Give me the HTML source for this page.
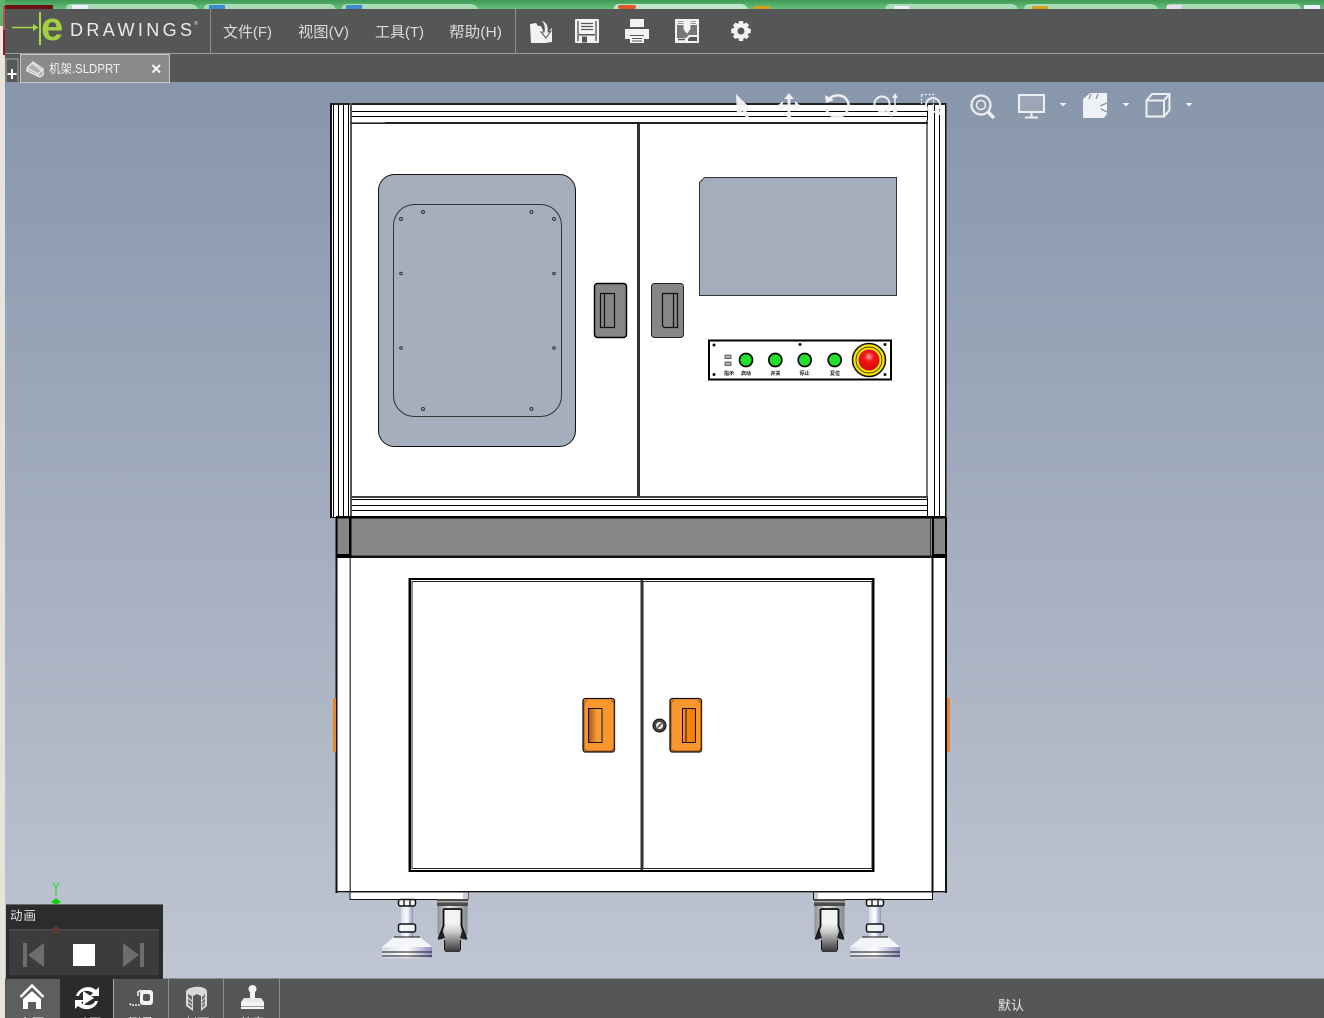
<!DOCTYPE html>
<html lang="zh"><head><meta charset="utf-8"><title>eDrawings</title>
<style>
html,body{margin:0;padding:0;width:1324px;height:1018px;overflow:hidden;background:#555756}
svg{display:block;position:absolute;left:0;top:0}
text{font-family:"Liberation Sans","Noto Sans CJK SC",sans-serif}
</style></head><body>
<svg width="1324" height="1018" viewBox="0 0 1324 1018" xmlns="http://www.w3.org/2000/svg">
<defs>
<linearGradient id="bg" x1="0" y1="0" x2="0" y2="1"><stop offset="0" stop-color="#8896ab"/><stop offset="1" stop-color="#bfc5d2"/></linearGradient>
<linearGradient id="green" x1="0" y1="0" x2="0" y2="1"><stop offset="0" stop-color="#3f9a55"/><stop offset="1" stop-color="#67c07c"/></linearGradient>
<linearGradient id="stem" x1="0" y1="0" x2="1" y2="0"><stop offset="0" stop-color="#d8dcea"/><stop offset=".5" stop-color="#ffffff"/><stop offset="1" stop-color="#8f90c0"/></linearGradient>
<linearGradient id="wheel" x1="0" y1="0" x2="0" y2="1"><stop offset="0" stop-color="#f0f0f0"/><stop offset=".25" stop-color="#d0d0d0"/><stop offset="1" stop-color="#333333"/></linearGradient>
<linearGradient id="cas" x1="0" y1="0" x2="1" y2="0"><stop offset="0" stop-color="#8d8f92"/><stop offset=".4" stop-color="#e4e6ea"/><stop offset="1" stop-color="#85878a"/></linearGradient>
<linearGradient id="org" x1="0" y1="0" x2="1" y2="0"><stop offset="0" stop-color="#a85510"/><stop offset=".6" stop-color="#f59a35"/><stop offset="1" stop-color="#f9a040"/></linearGradient>
<linearGradient id="org2" x1="0" y1="0" x2="1" y2="0"><stop offset="0" stop-color="#ff8c1a"/><stop offset="1" stop-color="#ee7a05"/></linearGradient>
<radialGradient id="red" cx=".5" cy=".35" r=".65"><stop offset="0" stop-color="#f5a0a0"/><stop offset=".35" stop-color="#f01818"/><stop offset="1" stop-color="#d80808"/></radialGradient>
<g id="foot">
<rect x="-6" y="0" width="12" height="38" fill="url(#stem)"/>
<rect x="-8.5" y="0.500" width="17" height="6.500" rx="2" fill="#f2f3f7" stroke="#111" stroke-width="1.500"/>
<path d="M-3 0V7M3 0V7" stroke="#111" stroke-width="1.300"/>
<rect x="-8.5" y="25" width="17" height="8" rx="2" fill="#f2f3f7" stroke="#111" stroke-width="1.500"/>
<path d="M-13 38H13L25 48H-25Z" fill="#f4f5f8"/>
<path d="M-25 48H25V59H-25Z" fill="url(#stem)"/>
<path d="M-13 38H13M-25 53H25M-25 57H25" stroke="#111" stroke-width="1.100"/>
<path d="M-25 59H25" stroke="#ccd" stroke-width="1"/>
</g>
<g id="caster">
<rect x="-15.500" y="-1" width="31" height="7" fill="#4c4c4c"/>
<rect x="-15.500" y="1" width="31" height="1.500" fill="#aaa"/>
<path d="M-15 6H15V34L12 40H-12L-15 34Z" fill="url(#cas)"/>
<path d="M-8 9H8V24H-8Z" fill="#f2f3f5"/>
<rect x="-8" y="24" width="16" height="28" rx="2" fill="url(#wheel)"/>
<path d="M-9 9V26L-14 39M9 9V26L14 39M-9 9H9" stroke="#111" stroke-width="1.800" fill="none"/>
<path d="M-14.500 40L-10 30L-7.500 38ZM14.500 40L10 30L7.500 38Z" fill="#222"/>
<path d="M-8 40V50M8 40V50" stroke="#111" stroke-width="1"/>
</g>
</defs>

<!-- desktop behind -->
<rect width="1324" height="9" fill="url(#green)"/>
<g fill="#a9dcb6">
<path d="M66 9C66 5 68 4 72 4H190C194 4 196 5 198 9Z"/>
<path d="M204 9C204 5 206 4 210 4H328C332 4 334 5 336 9Z"/>
<path d="M342 9C342 5 344 4 348 4H470C474 4 476 5 478 9Z"/>
<path d="M614 9C614 5 616 4 620 4H740C744 4 746 5 748 9Z" fill="#bfe8c8"/>
<path d="M885 9C885 5 888 4 892 4H1010C1014 4 1016 5 1018 9Z"/>
<path d="M1024 9C1024 5 1027 4 1031 4H1150C1154 4 1156 5 1158 9Z"/>
<path d="M1166 9C1166 5 1168 4 1172 4H1295C1298 4 1300 5 1301 9Z"/>
</g>
<rect x="72" y="5" width="16" height="4" fill="#e8eefc"/><rect x="209" y="5" width="16" height="4" fill="#3a8bd0"/><rect x="346" y="5" width="16" height="4" fill="#3a8bd0"/>
<rect x="618" y="5" width="18" height="4" rx="2" fill="#e2562a"/><rect x="754" y="6" width="16" height="3" fill="#d8a020"/><rect x="894" y="6" width="15" height="3" fill="#e8eefc"/><rect x="1032" y="6" width="16" height="3" fill="#d8a020"/><rect x="1167" y="5" width="15" height="4" fill="#e8dcf0"/><rect x="1304" y="5" width="16" height="4" fill="#e8f0fa"/>
<rect x="3" y="5" width="50" height="4" fill="#6d1018"/>
<rect x="0" y="0" width="5" height="1018" fill="#e8e4dc"/>
<rect x="0" y="0" width="5" height="6" fill="#5cb26e"/>
<rect x="0" y="6" width="3" height="20" fill="#5cb26e"/>
<rect x="3" y="6" width="2" height="24" fill="#c05050"/>
<rect x="0" y="26" width="3" height="29" fill="#efe9e4"/>
<rect x="3" y="30" width="2" height="25" fill="#8c1c22"/>

<!-- viewport -->
<rect x="5" y="82" width="1319" height="897" fill="url(#bg)"/>

<!-- toolbar -->
<rect x="5" y="9" width="1319" height="73" fill="#555756"/>
<rect x="5" y="53" width="1319" height="1" fill="#9a9b9a"/>
<rect x="210" y="9" width="1" height="45" fill="#8f908f"/>
<rect x="515" y="9" width="1" height="45" fill="#8f908f"/>
<path d="M12 27.500H37" stroke="#a8d84a" stroke-width="1.500"/>
<path d="M33 24L38.500 27.500L33 31Z" fill="#a8d84a"/>
<rect x="39" y="12" width="2" height="33" fill="#a8d84a"/>
<text x="41" y="40" font-size="40" font-weight="700" fill="#a4cf44">e</text>
<text x="70" y="36" font-size="18" fill="#ececec" textLength="122">DRAWINGS</text>
<text x="194" y="25" font-size="5" fill="#e8e8e8">®</text>
<g font-size="15" fill="#dcdcdc">
<text x="223" y="37" textLength="49" lengthAdjust="spacingAndGlyphs">文件(F)</text>
<text x="298" y="37" textLength="51" lengthAdjust="spacingAndGlyphs">视图(V)</text>
<text x="375" y="37" textLength="49" lengthAdjust="spacingAndGlyphs">工具(T)</text>
<text x="449" y="37" textLength="53" lengthAdjust="spacingAndGlyphs">帮助(H)</text>
</g>

<!-- tabs -->
<path d="M6 82V59H18V82" fill="#555756" stroke="#a8a8a8" stroke-width="1"/>
<path d="M12 69V79M7.500 74H16.500" stroke="#fff" stroke-width="2"/>
<rect x="20.500" y="54.500" width="149" height="28" fill="#8a8a8a" stroke="#c8c8c8"/>
<g fill="none" stroke="#e8e8e8" stroke-width="1.300">
<path d="M27 68L33 62L43 69V75L40 77L27 71Z" fill="#b0b0b0"/>
<path d="M27 68L38 74V77M38 74L43 69M32 63L41 70"/>
</g>
<text x="49" y="73" font-size="12.500" fill="#f2f2f2" textLength="71" lengthAdjust="spacingAndGlyphs">机架.SLDPRT</text>
<path d="M152.500 65L160 72.500M160 65L152.500 72.500" stroke="#f4f4f4" stroke-width="2"/>

<!-- toolbar icons -->
<g fill="#f2f2f2">
<path d="M530 24L536 23L538 26H541L545 35L552 28V42L545 43H531Z"/>
<path d="M540 20C546 21 549 25 548 32L551 31L546 38L541 32L544 32C545 27 544 23 540 20Z" stroke="#555756" stroke-width="1"/>
<!-- save -->
<rect x="575" y="19" width="24" height="24" rx="1"/>
<rect x="577" y="21" width="2" height="20" fill="#8a8a8a"/>
<rect x="595" y="21" width="2" height="20" fill="#8a8a8a"/>
<rect x="580" y="20.500" width="14" height="13" fill="#f6f6f6"/>
<path d="M581 23.500H593M581 26.500H593M581 29.500H593" stroke="#555756" stroke-width="1.200"/>
<rect x="579" y="34" width="16" height="1.500" fill="#555756"/>
<rect x="582" y="36.500" width="5" height="6" fill="#555756"/>
<!-- print -->
<path d="M630 19H644V27H630Z"/>
<path d="M625 29H649V39H644V35H630V39H625Z"/>
<path d="M630 36H644V43H630ZM632 38V39H642V38ZM632 40.500V41.500H642V40.500Z" fill-rule="evenodd"/>
<!-- report -->
<rect x="675" y="19" width="24" height="24"/>
<path d="M677 25H697V35H689L686 38H677Z" fill="#777"/>
<path d="M678 21.500H696M678 23.500H696" stroke="#777" stroke-width=".8"/>
<path d="M684 20H690V29L687 33L684 29Z" stroke="#f2f2f2"/>
<path d="M688 39L690 37H697V41H688Z" fill="#555756"/>
<path d="M678 39.500H685" stroke="#555756" stroke-width="1.500"/>
<!-- gear -->
<path d="M739 21H743L743.700 24 746.500 22.500 749 25 747.500 27.800 750.800 29V33L747.500 33.800 749 36.800 746.500 39 743.700 37.800 743 41H739L738.300 37.800 735.500 39 733 36.800 734.500 33.800 731.200 33V29L734.500 27.800 733 25 735.500 22.500 738.300 24ZM741 27.500A3.500 3.500 0 1 0 741 34.500A3.500 3.500 0 1 0 741 27.500Z" fill-rule="evenodd"/>
</g>

<!-- MACHINE -->
<g shape-rendering="crispEdges">
<rect x="331" y="103" width="615" height="415" fill="#fff"/>
<g stroke="#000" stroke-width="1" fill="none">
<path d="M333.500 103V517M338.500 103V517M343.500 103V517M348.500 103V517"/>
<path d="M927.500 103V517M934.500 104V517M939.500 104V517"/>
<path d="M350 111.500H927M350 116.500H927"/>
<path d="M350 499.500H927M350 505.500H927M350 510.500H927"/>
<path d="M331 517.500H350"/>
</g>
<rect x="330" y="103" width="2" height="415" fill="#111"/>
<rect x="945" y="103" width="1.500" height="415" fill="#111"/>
<rect x="330" y="103" width="616" height="2" fill="#222"/>
<rect x="350" y="103" width="2" height="414" fill="#555"/>
<rect x="926" y="120" width="2" height="378" fill="#777"/>
<rect x="351" y="122" width="577" height="2" fill="#222"/>
<rect x="352" y="122" width="33" height="1" fill="#777"/>
<rect x="351" y="496" width="577" height="2" fill="#444"/>
<rect x="637" y="124" width="3" height="372" fill="#333"/>
</g>

<!-- left window -->
<rect x="378.500" y="174.500" width="197" height="272" rx="16" fill="#a5aebd" stroke="#111" stroke-width="1"/>
<rect x="393.500" y="204.500" width="168" height="212" rx="21" fill="none" stroke="#333" stroke-width="1"/>
<g fill="none" stroke="#333" stroke-width="1">
<circle cx="423" cy="212" r="1.500"/><circle cx="531.500" cy="212" r="1.500"/><circle cx="401" cy="219" r="1.500"/><circle cx="554" cy="219" r="1.500"/>
<circle cx="401" cy="273.500" r="1.300"/><circle cx="554" cy="273.500" r="1.300"/><circle cx="401" cy="348" r="1.300"/><circle cx="554" cy="348" r="1.300"/>
<circle cx="423" cy="409" r="1.500"/><circle cx="531.500" cy="409" r="1.500"/>
</g>
<!-- right window -->
<path d="M704.500 177.500H896.500V295.500H699.500V182.500Z" fill="#a3adbc" stroke="#333" stroke-width="1"/>
<!-- handles upper -->
<rect x="594.500" y="283.500" width="32" height="54" rx="3" fill="#868686" stroke="#000" stroke-width="1.500"/>
<path d="M600.500 293.500H614.500V327.500H600.500ZM604.500 293.500V327.500" fill="none" stroke="#111" stroke-width="1.200"/>
<rect x="651.500" y="283.500" width="32" height="54" rx="3" fill="#868686" stroke="#222" stroke-width="1"/>
<path d="M662.500 293.500H677.500V327.500H665C663 327.500 662.500 326 662.500 324ZM673.500 293.500V327.500" fill="none" stroke="#111" stroke-width="1.200"/>

<!-- control panel -->
<rect x="709" y="340.500" width="182" height="39" fill="#fff" stroke="#000" stroke-width="2"/>
<rect x="725" y="355" width="6" height="3.500" fill="#a3adbc" stroke="#333" stroke-width=".7"/>
<rect x="725" y="362" width="6" height="3.500" fill="#a3adbc" stroke="#333" stroke-width=".7"/>
<g fill="#111"><circle cx="714" cy="345" r="1.500"/><circle cx="714" cy="374.500" r="1.500"/><circle cx="800" cy="344.500" r="1.500"/><circle cx="885" cy="344.500" r="1.500"/><circle cx="885" cy="374.500" r="1.500"/></g>
<g fill="#22e02c" stroke="#0a0a0a" stroke-width="1.700">
<circle cx="746" cy="360" r="6.500"/><circle cx="775.300" cy="360" r="6.500"/><circle cx="804.700" cy="360" r="6.500"/><circle cx="834.700" cy="360" r="6.500"/>
</g>
<g font-size="5" font-weight="700" fill="#111" text-anchor="middle">
<text x="729" y="375">指示</text><text x="746" y="375">启动</text><text x="775.500" y="375">开关</text><text x="804.500" y="375">停止</text><text x="835" y="375">复位</text>
</g>
<circle cx="869" cy="360" r="16.500" fill="#f5e400" stroke="#111" stroke-width="1.500"/>
<circle cx="869" cy="360" r="13" fill="none" stroke="#111" stroke-width=".7"/>
<circle cx="869" cy="360" r="10.500" fill="url(#red)"/>

<!-- band -->
<g shape-rendering="crispEdges">
<rect x="336" y="517" width="610" height="41" fill="#868686"/>
<rect x="336" y="516" width="610" height="2.500" fill="#000"/>
<rect x="336" y="555.500" width="610" height="2.500" fill="#111"/>
<rect x="335.500" y="517" width="2" height="41" fill="#000"/>
<rect x="349" y="517" width="2.500" height="41" fill="#000"/>
<rect x="930" y="517" width="1" height="41" fill="#333"/>
<rect x="932" y="517" width="2" height="41" fill="#000"/>
<rect x="945" y="517" width="2" height="41" fill="#000"/>
<rect x="336" y="554" width="14" height="4" fill="#000"/>
<rect x="932" y="554" width="14" height="4" fill="#000"/>
<!-- lower cabinet -->
<rect x="336" y="558" width="610" height="335" fill="#fff"/>
<rect x="335.500" y="558" width="2" height="335" fill="#111"/>
<rect x="349.500" y="558" width="1.500" height="335" fill="#555"/>
<rect x="931.500" y="558" width="2" height="335" fill="#111"/>
<rect x="945" y="558" width="2" height="335" fill="#111"/>
<rect x="336" y="891" width="610" height="1.500" fill="#111"/>
<!-- side orange tabs -->
<rect x="333" y="698" width="3" height="54" fill="#e8862a"/>
<rect x="947" y="698" width="3" height="54" fill="#e8862a"/>
<!-- door frame -->
<rect x="408.500" y="578" width="466" height="294" fill="#000"/>
<rect x="411" y="580" width="461" height="290" fill="#fff"/>
<rect x="412" y="581.500" width="229" height="287" fill="#fff" stroke="#222"/>
<rect x="643" y="581.500" width="229" height="287" fill="#fff" stroke="#222"/>
<rect x="640.500" y="580" width="2.500" height="290" fill="#333"/>
</g>
<!-- orange handles -->
<rect x="583" y="698.500" width="31.500" height="53.500" rx="2.500" fill="#f9962e" stroke="#111" stroke-width="1.300"/>
<path d="M587 700L584 703V749L587 751H611L614 749V703L611 700" fill="none" stroke="#7a4410" stroke-width=".8"/>
<rect x="588.500" y="708.500" width="13.500" height="34" fill="url(#org)" stroke="#111"/>
<rect x="670" y="698.500" width="31.500" height="53.500" rx="2.500" fill="#f9962e" stroke="#111" stroke-width="1.300"/>
<path d="M674 700L671 703V749L674 751H698L701 749V703L698 700" fill="none" stroke="#7a4410" stroke-width=".8"/>
<rect x="682.500" y="708.500" width="13" height="34" fill="url(#org2)" stroke="#111"/>
<path d="M686 708.500V742.500" stroke="#111"/>
<!-- lock -->
<circle cx="659.500" cy="725.500" r="6.500" fill="#444" stroke="#111"/>
<circle cx="659.500" cy="725.500" r="3.500" fill="#eee"/>
<path d="M657.500 727.500L661.500 723.500" stroke="#333" stroke-width="1.300"/>

<!-- bottom rail + feet -->
<g shape-rendering="crispEdges">
<rect x="350" y="892" width="118" height="7.500" fill="#fff" stroke="#111" stroke-width="1"/>
<rect x="813.500" y="892" width="119" height="7.500" fill="#fff" stroke="#111" stroke-width="1"/>
<rect x="463" y="893" width="5" height="6" fill="#ccc"/>
<rect x="814" y="893" width="4" height="6" fill="#ccc"/>
</g>
<use href="#foot" x="407" y="899"/>
<use href="#foot" x="875" y="899"/>
<use href="#caster" x="452.500" y="900"/>
<use href="#caster" x="829.500" y="900"/>

<!-- view toolbar icons -->
<g fill="none" stroke="#f2f3f6" stroke-width="2.500" opacity=".95">
<path d="M736 94L752 110H746L749 118H746L742.500 111L737 116Z" fill="#f2f3f6" stroke="none"/>
<path d="M789 96V116M779 106H799" stroke-width="3"/>
<path d="M789 93L784 99H794ZM789 119L784 113H794ZM777 106L783 101V111ZM801 106L795 101V111Z" fill="#f2f3f6" stroke="none"/>
<path d="M829 99C834 94 843 94 847 100C851 107 847 116 838 117C832 117 828 114 826 109"/>
<path d="M825 95L834 100L826 103Z" fill="#f2f3f6" stroke="none"/>
<circle cx="882" cy="104" r="7.500" stroke-width="2"/>
<path d="M887 110L892 116" stroke-width="3"/>
<path d="M895 96V112" stroke-width="1.600"/>
<path d="M895 93L892 98H898ZM895 115L892 110H898Z" fill="#f2f3f6" stroke="none"/>
<rect x="921.500" y="94.500" width="12" height="12" stroke-width="1.200" stroke-dasharray="2 1.500"/>
<circle cx="933" cy="105" r="7" stroke-width="2"/>
<path d="M938 111L944 118" stroke-width="3"/>
<circle cx="981" cy="105" r="9.500" stroke-width="2.200"/>
<circle cx="981" cy="105" r="4.500" stroke-width="1.500"/>
<path d="M988 112L994 118" stroke-width="3.500"/>
<rect x="1019" y="95" width="25" height="17" fill="#9ea7b8" stroke-width="2"/>
<path d="M1031.500 112V117M1025 117.500H1038" stroke-width="2"/>
<path d="M1083 99L1090 93H1107V114L1104 118H1083Z" fill="#f6f6f8" stroke="none"/>
<path d="M1091 94L1089 99M1098 94L1096 99M1107 103L1100 106M1107 112L1101 109" stroke="#8d99ad" stroke-width="1.400"/>
<path d="M1146.500 100.500L1152 94H1169.500V110L1164 116.500H1146.500ZM1146.500 100.500H1164V116.500M1164 100.500L1169.500 94" stroke-width="2"/>
</g>
<g fill="#f4f4f6">
<path d="M1059.500 103H1066.500L1063 106.500Z"/>
<path d="M1122.500 103H1129.500L1126 106.500Z"/>
<path d="M1185.500 103H1192.500L1189 106.500Z"/>
</g>

<!-- triad -->
<path d="M53 882.500L56 887.500L59 882.500M56 887.500V896" fill="none" stroke="#1ce01c" stroke-width="1"/>
<path d="M51 902L56 898L61 902L56 905Z" fill="#10d010"/>

<!-- bottom bar -->
<rect x="5" y="978" width="1319" height="40" fill="#555756"/>
<rect x="5" y="978" width="1319" height="1" fill="#8d8e8d"/>
<rect x="6" y="979" width="54" height="39" fill="#5d5f5e"/>
<rect x="60" y="979" width="53" height="39" fill="#2b2b2b"/>
<rect x="113" y="979" width="1" height="39" fill="#a5a5a5"/>
<rect x="168" y="979" width="1" height="39" fill="#8f8f8f"/>
<rect x="223" y="979" width="1" height="39" fill="#8f8f8f"/>
<rect x="279" y="979" width="1" height="39" fill="#8f8f8f"/>
<text x="998" y="1010" font-size="13" fill="#e8e8e8">默认</text>
<g font-size="12.500" fill="#f0f0f0" text-anchor="middle">
<text x="32" y="1027.500">主页</text><text x="89" y="1027.500">动画</text><text x="141" y="1027.500">测量</text><text x="197" y="1027.500">剖面</text><text x="252" y="1027.500">盖章</text>
</g>
<!-- home -->
<path d="M20.500 997L32 985.500L43.500 997" fill="none" stroke="#fff" stroke-width="2.500"/>
<path d="M32 991L41 999V1009H36V1002H28V1009H23V999Z" fill="#fff"/>
<!-- animate -->
<path d="M83 991L94 998L83 1005Z" fill="#fff"/>
<path d="M76 996C78 988 89 984 96 990L99 987V996H90L93 993C87 989 80 991 79 996Z" fill="#fff"/>
<path d="M98 1001C96 1009 85 1012 78 1006L75 1009V1000H84L81 1003C87 1007 94 1005 95 1001Z" fill="#fff"/>
<!-- measure -->
<rect x="140" y="990" width="13" height="15" rx="3" fill="#f4f4f4"/>
<rect x="143" y="994" width="7" height="7" rx="2" fill="#555756"/>
<path d="M140 1005H131L129 1003" fill="none" stroke="#f0f0f0" stroke-width="1.500" stroke-dasharray="2 1"/>
<path d="M141 990L138 992V996" stroke="#f0f0f0" fill="none" stroke-width="1.500"/>
<!-- section -->
<path d="M186 992C186 986 207 984 207 992V1006L201 1011V996L197 994L193 996V1011L186 1006Z" fill="#d8d8d8"/>
<path d="M188 994L192 996V1008L188 1005ZM202 997L205 994V1005L202 1008Z" fill="#6e6e6e"/>
<path d="M188 998L192 1001M188 1002L192 1005M202 1001L205 998M202 1005L205 1002" stroke="#eee" stroke-width=".8"/>
<!-- stamp -->
<circle cx="252.500" cy="989" r="4" fill="#f4f4f4"/>
<rect x="250" y="991" width="5" height="9" fill="#f4f4f4"/>
<path d="M244 998H261L264 1002H241Z" fill="#e8e8e8"/>
<rect x="241" y="1002" width="23" height="7" fill="#f4f4f4"/>
<rect x="241" y="1006" width="23" height="1" fill="#999"/>

<!-- animation panel -->
<rect x="6" y="904" width="157" height="75" fill="#2c2c2c"/>
<rect x="6" y="904" width="157" height="1" fill="#6a6a6c"/>
<text x="10" y="920" font-size="12.500" fill="#e6e6e6" textLength="26">动画</text>
<rect x="9" y="929" width="150" height="46" fill="#3c3c3c"/>
<rect x="9" y="929" width="150" height="2" fill="#484848"/>
<circle cx="56" cy="930" r="3.500" fill="#5b3a36"/>
<rect x="23" y="943" width="4" height="24" fill="#6d6d6d"/>
<path d="M44 943V967L28 955Z" fill="#6d6d6d"/>
<rect x="73" y="944" width="22" height="22" fill="#fff"/>
<path d="M123 943V967L139 955Z" fill="#6d6d6d"/>
<rect x="140" y="943" width="4" height="24" fill="#6d6d6d"/>
</svg>
</body></html>
